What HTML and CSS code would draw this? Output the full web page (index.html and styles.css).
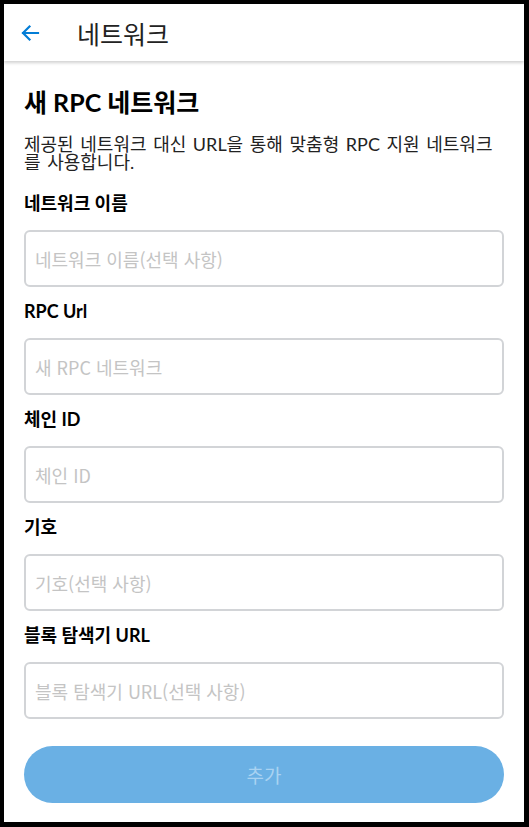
FILE: index.html
```html
<!DOCTYPE html>
<html lang="ko">
<head>
<meta charset="utf-8"/>
<meta content="width=device-width, initial-scale=1.0" name="viewport"/>
<title>네트워크</title>
<link rel="stylesheet" href="styles.css">
</head>
<body>
<div class="screen">
<div class="header">
<button class="btn-back" aria-label="뒤로">
<svg width="20" height="20" viewBox="0 0 20 20"><path d="M18 10H3 M9.5 3.5L3 10l6.5 6.5" fill="none" stroke="#037dd6" stroke-width="2.2" stroke-linecap="square"/></svg>
</button>
<h1>네트워크</h1>
</div>
<div class="content">
<h2>새 RPC 네트워크</h2>
<p class="desc">제공된 네트워크 대신 URL을 통해 맞춤형 RPC 지원 네트워크를 사용합니다.</p>
<div class="field">
<label>네트워크 이름</label>
<input type="text" placeholder="네트워크 이름(선택 사항)"/>
</div>
<div class="field">
<label>RPC Url</label>
<input type="text" placeholder="새 RPC 네트워크"/>
</div>
<div class="field">
<label>체인 ID</label>
<input type="text" placeholder="체인 ID"/>
</div>
<div class="field">
<label>기호</label>
<input type="text" placeholder="기호(선택 사항)"/>
</div>
<div class="field">
<label>블록 탐색기 URL</label>
<input type="text" placeholder="블록 탐색기 URL(선택 사항)"/>
</div>
<button class="btn-add" disabled>추가</button>
</div>
</div>
</body>
</html>
```

FILE: styles.css
```css
* {
  margin: 0;
  padding: 0;
  box-sizing: border-box;
}
body {
  background: #000;
  padding: 4px 5px 5px 4px;
  font-family: Lato, "Noto Sans CJK KR", sans-serif;
  color: #000;
}
.screen {
  background: white;
  height: 818px;
  overflow: hidden;
}
.header {
  display: flex;
  align-items: center;
  height: 57px;
  padding-left: 15px;
  box-shadow: 0 2px 3px rgba(0,0,0,0.18);
  position: relative;
}
.btn-back {
  background: none;
  border: none;
  width: 22px;
  height: 22px;
  display: flex;
  align-items: center;
  justify-content: center;
}
.header h1 {
  margin-left: 36px;
  font-family: Roboto, "Noto Sans CJK KR", sans-serif;
  font-weight: 400;
  font-size: 25px;
  color: #222;
}
.content {
  padding: 26px 20px 0;
}
.content h2 {
  font-size: 25px;
  font-weight: 700;
  line-height: 30px;
}
.desc {
  margin-top: 18px;
  font-size: 18px;
  line-height: 18px;
  word-spacing: 2px;
  color: #222;
}
.field {
  margin-top: 21px;
}
.field + .field {
  margin-top: 13px;
}
.field label {
  display: block;
  font-size: 18px;
  font-weight: 700;
  line-height: 22px;
}
.field input {
  display: block;
  width: 100%;
  height: 57px;
  margin-top: 16px;
  padding: 0 9px;
  border: 2px solid #d2d4d7;
  border-radius: 6px;
  font-family: "Noto Sans CJK KR", sans-serif;
  font-size: 18px;
  color: #333;
}
.field input::placeholder {
  color: #c4c4c4;
}
.btn-add {
  display: block;
  width: 100%;
  height: 57px;
  margin-top: 27px;
  border: none;
  border-radius: 29px;
  background: #6ab0e4;
  color: #a9d3f2;
  font-family: "Noto Sans CJK KR", sans-serif;
  font-size: 19px;
}
```
